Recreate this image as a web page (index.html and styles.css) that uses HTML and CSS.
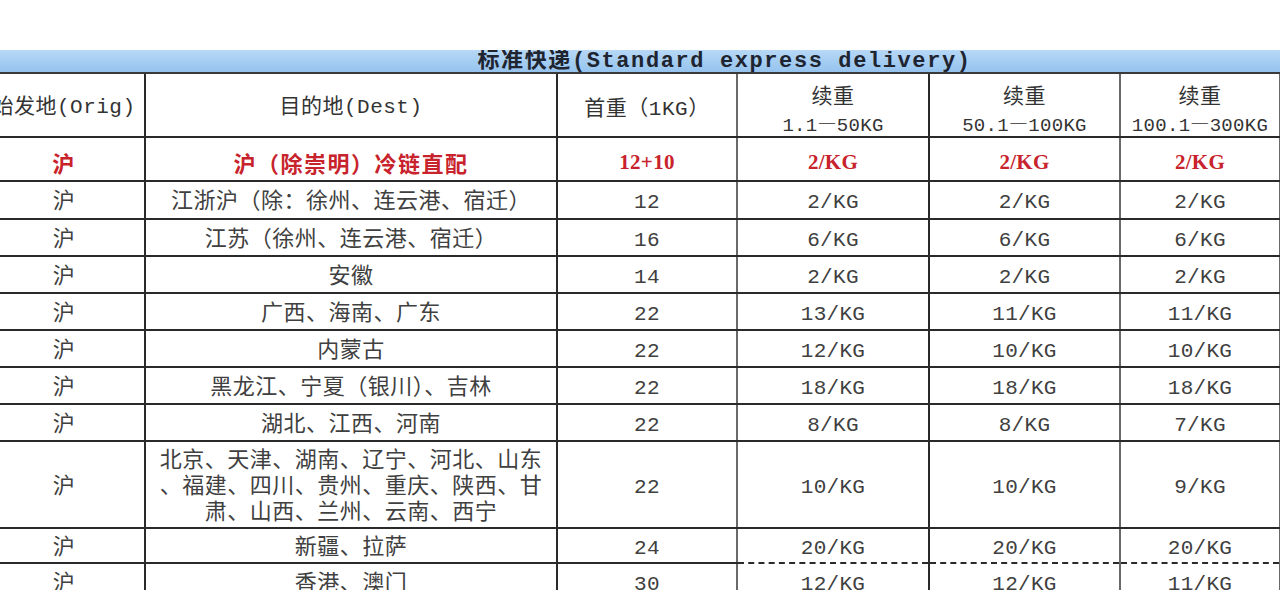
FILE: index.html
```html
<!DOCTYPE html>
<html lang="zh-CN">
<head>
<meta charset="utf-8">
<title>标准快递</title>
<link rel="stylesheet" href="styles.css">
</head>
<body>
<div class="frame">
  <table class="rates">
    <colgroup>
      <col class="c1"><col class="c2"><col class="c3"><col class="c4"><col class="c5"><col class="c6">
    </colgroup>
    <thead>
      <tr class="title-row"><th colspan="6" class="title">标准快递(Standard express delivery)</th></tr>
      <tr class="head-row">
        <th class="k1">始发地(Orig)</th>
        <th class="k2">目的地(Dest)</th>
        <th class="k3">首重<span class="cjk">（</span>1KG<span class="cjk">）</span></th>
        <th class="k4 two"><span class="top">续重</span><span class="sub">1.1<span class="cjk">—</span>50KG</span></th>
        <th class="k5 two"><span class="top">续重</span><span class="sub">50.1<span class="cjk">—</span>100KG</span></th>
        <th class="k6 two"><span class="top">续重</span><span class="sub">100.1<span class="cjk">—</span>300KG</span></th>
      </tr>
    </thead>
    <tbody>
      <tr class="hot r44">
        <td class="k1">沪</td><td class="k2">沪（除崇明）冷链直配</td><td class="k3">12+10</td><td class="k4">2/KG</td><td class="k5">2/KG</td><td class="k6">2/KG</td>
      </tr>
      <tr class="r38">
        <td class="k1">沪</td><td class="k2">江浙沪（除：徐州、连云港、宿迁）</td><td class="k3">12</td><td class="k4">2/KG</td><td class="k5">2/KG</td><td class="k6">2/KG</td>
      </tr>
      <tr class="r37">
        <td class="k1">沪</td><td class="k2">江苏（徐州、连云港、宿迁）</td><td class="k3">16</td><td class="k4">6/KG</td><td class="k5">6/KG</td><td class="k6">6/KG</td>
      </tr>
      <tr class="r37">
        <td class="k1">沪</td><td class="k2">安徽</td><td class="k3">14</td><td class="k4">2/KG</td><td class="k5">2/KG</td><td class="k6">2/KG</td>
      </tr>
      <tr class="r37">
        <td class="k1">沪</td><td class="k2">广西、海南、广东</td><td class="k3">22</td><td class="k4">13/KG</td><td class="k5">11/KG</td><td class="k6">11/KG</td>
      </tr>
      <tr class="r37">
        <td class="k1">沪</td><td class="k2">内蒙古</td><td class="k3">22</td><td class="k4">12/KG</td><td class="k5">10/KG</td><td class="k6">10/KG</td>
      </tr>
      <tr class="r37">
        <td class="k1">沪</td><td class="k2">黑龙江、宁夏（银川）、吉林</td><td class="k3">22</td><td class="k4">18/KG</td><td class="k5">18/KG</td><td class="k6">18/KG</td>
      </tr>
      <tr class="r37">
        <td class="k1">沪</td><td class="k2">湖北、江西、河南</td><td class="k3">22</td><td class="k4">8/KG</td><td class="k5">8/KG</td><td class="k6">7/KG</td>
      </tr>
      <tr class="r87">
        <td class="k1">沪</td><td class="k2 multi">北京、天津、湖南、辽宁、河北、山东<br>、福建、四川、贵州、重庆、陕西、甘<br>肃、山西、兰州、云南、西宁</td><td class="k3">22</td><td class="k4">10/KG</td><td class="k5">10/KG</td><td class="k6">9/KG</td>
      </tr>
      <tr class="r35 torn">
        <td class="k1">沪</td><td class="k2">新疆、拉萨</td><td class="k3">24</td><td class="k4 dash">20/KG</td><td class="k5 dash">20/KG</td><td class="k6 dash">20/KG</td>
      </tr>
      <tr class="r37">
        <td class="k1">沪</td><td class="k2">香港、澳门</td><td class="k3">30</td><td class="k4">12/KG</td><td class="k5">12/KG</td><td class="k6">11/KG</td>
      </tr>
    </tbody>
  </table>
</div>
</body>
</html>
```

FILE: styles.css
```css
html, body {
  margin: 0;
  padding: 0;
  background: #ffffff;
  overflow: hidden;
}

.frame {
  margin-top: 50px;
  margin-left: -16px;
  width: 1296px;
  height: 540px;
  overflow: hidden;
}

.rates {
  border-collapse: collapse;
  table-layout: fixed;
  width: 1296px;
  font-family: "Liberation Mono", "Noto Sans CJK SC", monospace;
  font-size: 22px;
  line-height: 30px;
  color: #404040;
  letter-spacing: 0.5px;
}

.c1 { width: 161px; }
.c2 { width: 412px; }
.c3 { width: 180px; }
.c4 { width: 192px; }
.c5 { width: 191px; }
.c6 { width: 160px; }

.cjk {
  font-family: "Noto Sans CJK SC", sans-serif;
}

.rates th,
.rates td {
  padding: 0;
  text-align: center;
  vertical-align: middle;
  border-right: 2px solid #2a2a2a;
  border-bottom: 2px solid #2a2a2a;
  font-weight: 400;
  white-space: nowrap;
  overflow: hidden;
}

.rates tbody td {
  padding-top: 6px;
  line-height: 26px;
}

.rates td.k3,
.rates td.k4,
.rates td.k5,
.rates td.k6 {
  font-size: 21px;
  letter-spacing: 0.3px;
}

.rates .k3 { border-right-color: #6a6a6a; }
.rates .k4 { border-right-color: #2a2a2a; }
.rates .k5 { border-right-color: #6a6a6a; }
.rates .k6 { border-right-color: #6a6a6a; }

.title-row .title {
  height: 20px;
  padding-top: 2px;
  background: linear-gradient(#b7d8f6, #95c3ee);
  border-bottom: 2px solid #3a3a3a;
  border-right: none;
  padding-left: 185px;
  font-size: 22px;
  font-weight: 700;
  letter-spacing: 1.6px;
  color: #1e2430;
  line-height: 20px;
}

.head-row th {
  height: 52px;
  padding-top: 6px;
  font-size: 21px;
  line-height: 26px;
  color: #333333;
}

.head-row th.two {
  padding-top: 0;
  height: 58px;
}

.head-row .top,
.head-row .sub {
  display: block;
}

.head-row .top {
  font-family: "Noto Sans CJK SC", sans-serif;
  line-height: 29px;
  padding-top: 6px;
}

.head-row .sub {
  font-size: 19px;
  letter-spacing: 0.3px;
  line-height: 27px;
  margin-bottom: -4px;
}

.hot td {
  color: #c8232c;
  font-weight: 700;
  font-family: "Liberation Serif", "Noto Sans CJK SC", serif;
}

.rates .hot td.k3,
.rates .hot td.k4,
.rates .hot td.k5,
.rates .hot td.k6 {
  font-size: 21px;
  letter-spacing: 0.3px;
}

.hot .k1,
.hot .k2 {
  font-family: "Noto Sans CJK SC", sans-serif;
  font-size: 22px;
  letter-spacing: 1.5px;
}

.r44 td { height: 36px; }
.r38 td { height: 30px; }
.r37 td { height: 29px; }
.r35 td { height: 27px; }
.r87 td { height: 79px; }

.rates tbody .multi {
  height: 78px;
  line-height: 26px;
  padding-top: 7px;
  vertical-align: top;
}

.torn .dash {
  border-bottom: 2px dashed #2a2a2a;
}
```
